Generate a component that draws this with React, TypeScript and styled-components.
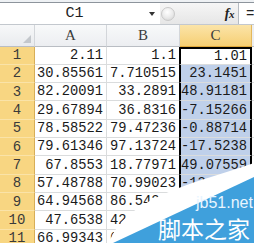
import React from "react";
import styled, { createGlobalStyle } from "styled-components";

const GlobalStyle = createGlobalStyle`
  html, body { margin: 0; padding: 0; background: #fff; }
  body { width: 254px; height: 243px; overflow: hidden; }
  * { box-sizing: border-box; }
`;

const Frame = styled.div`
  position: relative;
  width: 254px;
  height: 243px;
  overflow: hidden;
  background: #fff;
  font-family: "Liberation Mono", "DejaVu Sans Mono", monospace;
`;

const TopStrip = styled.div`
  height: 2px;
  background: #eef1f4;
`;

const FormulaBar = styled.div`
  display: flex;
  height: 23px;
  border-top: 1px solid #8d949c;
  border-bottom: 1px solid #c3c8ce;
  background: #fff;
`;

const NameBox = styled.div`
  width: 160px;
  display: flex;
  align-items: center;
`;

const NameText = styled.span`
  flex: 1;
  text-align: center;
  font-size: 15px;
  color: #1e1e1e;
`;

const DropArrow = styled.span`
  width: 0;
  height: 0;
  border-left: 3.5px solid transparent;
  border-right: 3.5px solid transparent;
  border-top: 4px solid #333;
  margin-right: 5px;
  margin-top: 1px;
`;

const ButtonArea = styled.div`
  flex: 1;
  display: flex;
  align-items: center;
  justify-content: space-between;
  background: linear-gradient(#f6f6f6, #e6e6e6);
  border-right: 1px solid #b5bbc2;
  padding-right: 4px;
`;

const Knob = styled.span`
  width: 14px;
  height: 14px;
  margin-left: 1px;
  border-radius: 50%;
  border: 1px solid #c9c9c9;
  background: radial-gradient(circle at 45% 35%, #ffffff 0%, #e9e9e9 55%, #cfcfcf 100%);
`;

const Fx = styled.span`
  font-family: "Liberation Serif", "DejaVu Serif", serif;
  font-style: italic;
  font-weight: bold;
  font-size: 14px;
  color: #222;
  letter-spacing: -0.5px;
`;

const FxSub = styled.span`
  font-size: 11px;
`;

const FormulaInput = styled.div`
  width: 15px;
  display: flex;
  align-items: center;
  padding-left: 7px;
  font-size: 14px;
  color: #222;
`;

const Sheet = styled.div`
  display: grid;
  grid-template-columns: 35px 72px 73px 72px 2px;
  grid-template-rows: 21.5px repeat(11, 18.33px);
`;

const Corner = styled.div`
  position: relative;
  background: linear-gradient(#f7f8f9, #e9ebee);
  border-right: 1px solid #d3d6da;
  border-bottom: 1px solid #b9bdc3;
  &::after {
    content: "";
    position: absolute;
    right: 3px;
    bottom: 3px;
    width: 0;
    height: 0;
    border-left: 8px solid transparent;
    border-bottom: 8px solid #c3c7cc;
  }
`;

const ColHead = styled.div<{ $active?: boolean }>`
  display: flex;
  align-items: center;
  justify-content: center;
  font-family: "Liberation Serif", "DejaVu Serif", serif;
  font-size: 15px;
  color: #3c3c3c;
  padding-top: 1px;
  background: ${(p) =>
    p.$active
      ? "linear-gradient(#fbe4a8, #f6cf74)"
      : "linear-gradient(#f8f9fa, #eceef1)"};
  border-right: 1px solid ${(p) => (p.$active ? "#e4b85c" : "#d3d6da")};
  border-bottom: 1px solid ${(p) => (p.$active ? "#e0a83a" : "#b9bdc3")};
`;

const RowHead = styled.div`
  display: flex;
  align-items: center;
  justify-content: center;
  font-size: 14px;
  color: #3a3a3a;
  background: #f8d682;
  border-right: 1px solid #d7ae58;
  border-bottom: 1px solid #fae3a8;
`;

const Cell = styled.div<{ $sel?: boolean; $active?: boolean; $first?: boolean }>`
  display: flex;
  align-items: center;
  justify-content: flex-end;
  padding-right: 3px;
  font-size: 13.75px;
  color: #1a1a1a;
  white-space: nowrap;
  overflow: hidden;
  background: ${(p) => (p.$sel && !p.$active ? "#bfd0ea" : "#fff")};
  border-right: ${(p) => (p.$sel ? "2px solid #000" : "1px solid #dadcdd")};
  border-left: ${(p) => (p.$sel ? "2px solid #000" : "none")};
  border-top: ${(p) => (p.$first ? "2px solid #000" : "none")};
  border-bottom: 1px solid #dadcdd;
  margin-left: ${(p) => (p.$sel ? "-1px" : "0")};
`;

const Edge = styled.div<{ $head?: boolean }>`
  background: ${(p) => (p.$head ? "#eceef1" : "#fff")};
  border-bottom: 1px solid ${(p) => (p.$head ? "#b9bdc3" : "#dadcdd")};
`;

const Watermark = styled.svg`
  position: absolute;
  left: 0;
  top: 0;
  width: 254px;
  height: 243px;
  pointer-events: none;
`;

const WmSite = styled.span`
  position: absolute;
  left: 196px;
  top: 195px;
  font-family: "Liberation Sans", Arial, sans-serif;
  font-size: 16px;
  line-height: 16px;
  color: #e8f5ff;
`;

const WmName = styled.span`
  position: absolute;
  left: 158px;
  top: 217px;
  font-family: "Noto Sans CJK SC", "Noto Sans", sans-serif;
  font-size: 23px;
  line-height: 23px;
  color: #fff;
`;

const rows: [string, string, string][] = [
  ["2.11", "1.1", "1.01"],
  ["30.85561", "7.710515", "23.1451"],
  ["82.20091", "33.2891", "48.91181"],
  ["29.67894", "36.8316", "-7.15266"],
  ["78.58522", "79.47236", "-0.88714"],
  ["79.61346", "97.13724", "-17.5238"],
  ["67.8553", "18.77971", "49.07559"],
  ["57.48788", "70.99023", "-13.5186"],
  ["64.94568", "86.54217", "-21.3307"],
  ["47.6538", "42.31876", "5.34512"],
  ["66.99343", "61.20934", "-5.78641"],
];

export default function App() {
  return (
    <Frame>
      <GlobalStyle />
      <TopStrip />
      <FormulaBar>
        <NameBox>
          <NameText>C1</NameText>
          <DropArrow />
        </NameBox>
        <ButtonArea>
          <Knob />
          <Fx>
            f<FxSub>x</FxSub>
          </Fx>
        </ButtonArea>
        <FormulaInput>=</FormulaInput>
      </FormulaBar>
      <Sheet>
        <Corner />
        <ColHead>A</ColHead>
        <ColHead>B</ColHead>
        <ColHead $active>C</ColHead>
        <Edge $head />
        {rows.map((r, i) => (
          <React.Fragment key={i}>
            <RowHead>{i + 1}</RowHead>
            <Cell>{r[0]}</Cell>
            <Cell>{r[1]}</Cell>
            <Cell $sel $active={i === 0} $first={i === 0}>
              {r[2]}
            </Cell>
            <Edge />
          </React.Fragment>
        ))}
      </Sheet>
      <Watermark viewBox="0 0 254 243">
        <path d="M254 163 C 200 182 126 196 109 243 L 254 243 Z" fill="#ffffff" />
        <path d="M254 177 L 113 243 L 254 243 Z" fill="#3fa0dc" />
      </Watermark>
      <WmSite>jb51.net</WmSite>
      <WmName>脚本之家</WmName>
    </Frame>
  );
}
